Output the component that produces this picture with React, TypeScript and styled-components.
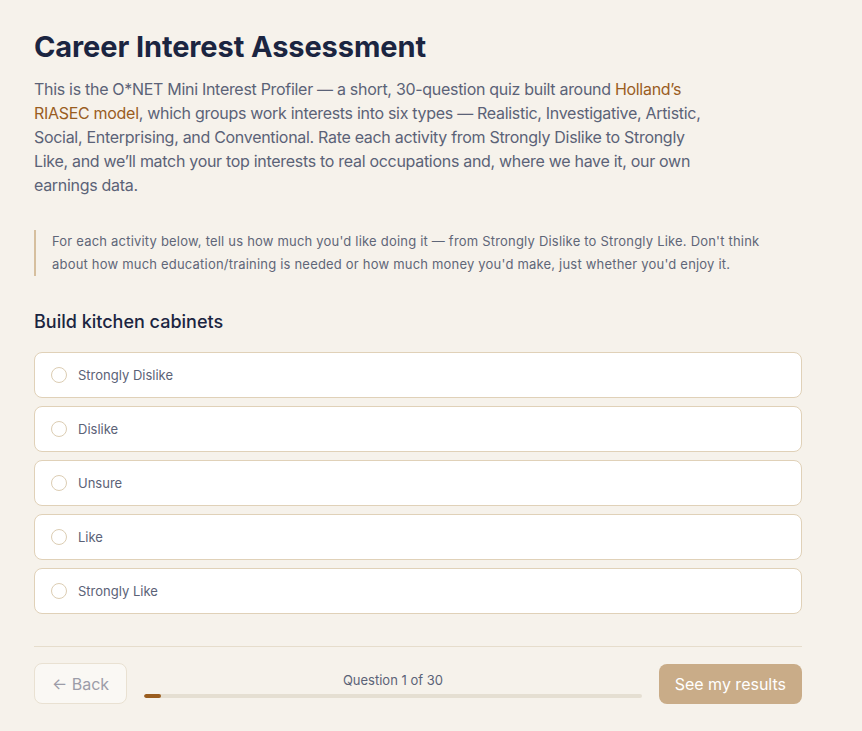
import React, { useState } from "react";
import styled, { createGlobalStyle } from "styled-components";

const GlobalStyle = createGlobalStyle`
  * { box-sizing: border-box; }
  html, body { margin: 0; padding: 0; background: #f6f2eb; }
  body { font-family: Inter, "Noto Sans", sans-serif; -webkit-font-smoothing: antialiased; }
`;

const Page = styled.main`
  padding: 29px 34px 40px 34px;
  width: 836px;
`;

const Title = styled.h1`
  margin: 0;
  font-size: 29px;
  line-height: 36px;
  font-weight: 700;
  color: #1b2541;
  letter-spacing: -0.1px;
`;

const Intro = styled.p`
  margin: 12px 0 0 0;
  max-width: 680px;
  font-size: 16px;
  line-height: 24px;
  letter-spacing: -0.3px;
  color: #5b6277;
`;

const Accent = styled.a`
  color: #9a5d1f;
  text-decoration: none;
`;

const Note = styled.blockquote`
  margin: 33px 0 0 0;
  padding: 0 0 0 16px;
  max-width: 745px;
  border-left: 2px solid #d6bf9e;
  font-size: 13px;
  line-height: 23px;
  letter-spacing: 0.2px;
  color: #5f6678;
`;

const Question = styled.h2`
  margin: 32px 0 0 0;
  font-size: 18px;
  line-height: 28px;
  font-weight: 500;
  color: #1b2541;
`;

const Options = styled.div`
  margin-top: 16px;
  display: flex;
  flex-direction: column;
  gap: 8px;
`;

const Option = styled.label<{ $selected?: boolean }>`
  display: flex;
  align-items: center;
  gap: 11px;
  height: 46px;
  padding: 0 16px;
  background: #ffffff;
  border: 1px solid ${(p) => (p.$selected ? "#9a5d1f" : "#e0d1b8")};
  border-radius: 8px;
  cursor: pointer;
`;

const Radio = styled.span<{ $selected?: boolean }>`
  width: 16px;
  height: 16px;
  border-radius: 50%;
  border: 1.5px solid #dccdb3;
  background: ${(p) => (p.$selected ? "#9a5d1f" : "#fff")};
  flex: none;
`;

const OptionText = styled.span`
  font-size: 13px;
  color: #5b6277;
`;

const Divider = styled.hr`
  margin: 32px 0 0 0;
  border: none;
  border-top: 1px solid #e6ddcc;
`;

const Footer = styled.div`
  margin-top: 16px;
  display: flex;
  align-items: center;
  gap: 17px;
`;

const BackButton = styled.button`
  height: 41px;
  padding: 0 17px;
  border: 1px solid #e9e1d2;
  border-radius: 8px;
  background: #faf8f4;
  color: #9c9ca8;
  font-family: inherit;
  font-size: 16px;
  cursor: default;
`;

const Progress = styled.div`
  flex: 1;
  display: flex;
  flex-direction: column;
  align-items: center;
  gap: 5px;
  padding-top: 2px;
`;

const ProgressLabel = styled.div`
  font-size: 13px;
  line-height: 18px;
  color: #5b6277;
`;

const Track = styled.div`
  width: 100%;
  height: 4px;
  border-radius: 2px;
  background: #e5dfd2;
  overflow: hidden;
`;

const Fill = styled.div`
  height: 100%;
  border-radius: 2px;
  background: #9a5d1f;
`;

const ResultsButton = styled.button`
  height: 40px;
  padding: 0 16px;
  border: none;
  border-radius: 8px;
  background: #c9ac88;
  color: #ffffff;
  font-family: inherit;
  font-size: 16px;
  cursor: default;
`;

const choices = ["Strongly Dislike", "Dislike", "Unsure", "Like", "Strongly Like"];

export default function App() {
  const [selected, setSelected] = useState<number | null>(null);
  const current = 1;
  const total = 30;
  return (
    <>
      <GlobalStyle />
      <Page>
        <Title>Career Interest Assessment</Title>
        <Intro>
          This is the O*NET Mini Interest Profiler — a short, 30-question quiz built around{" "}
          <Accent href="#">Holland’s RIASEC model</Accent>, which groups work interests into six
          types — Realistic, Investigative, Artistic, Social, Enterprising, and Conventional. Rate
          each activity from Strongly Dislike to Strongly Like, and we’ll match your top interests
          to real occupations and, where we have it, our own earnings data.
        </Intro>
        <Note>
          For each activity below, tell us how much you'd like doing it — from Strongly Dislike to
          Strongly Like. Don't think about how much education/training is needed or how much money
          you'd make, just whether you'd enjoy it.
        </Note>
        <Question>Build kitchen cabinets</Question>
        <Options>
          {choices.map((c, i) => (
            <Option key={c} $selected={selected === i} onClick={() => setSelected(i)}>
              <Radio $selected={selected === i} />
              <OptionText>{c}</OptionText>
            </Option>
          ))}
        </Options>
        <Divider />
        <Footer>
          <BackButton>← Back</BackButton>
          <Progress>
            <ProgressLabel>
              Question {current} of {total}
            </ProgressLabel>
            <Track>
              <Fill style={{ width: `${(current / total) * 100}%` }} />
            </Track>
          </Progress>
          <ResultsButton>See my results</ResultsButton>
        </Footer>
      </Page>
    </>
  );
}
